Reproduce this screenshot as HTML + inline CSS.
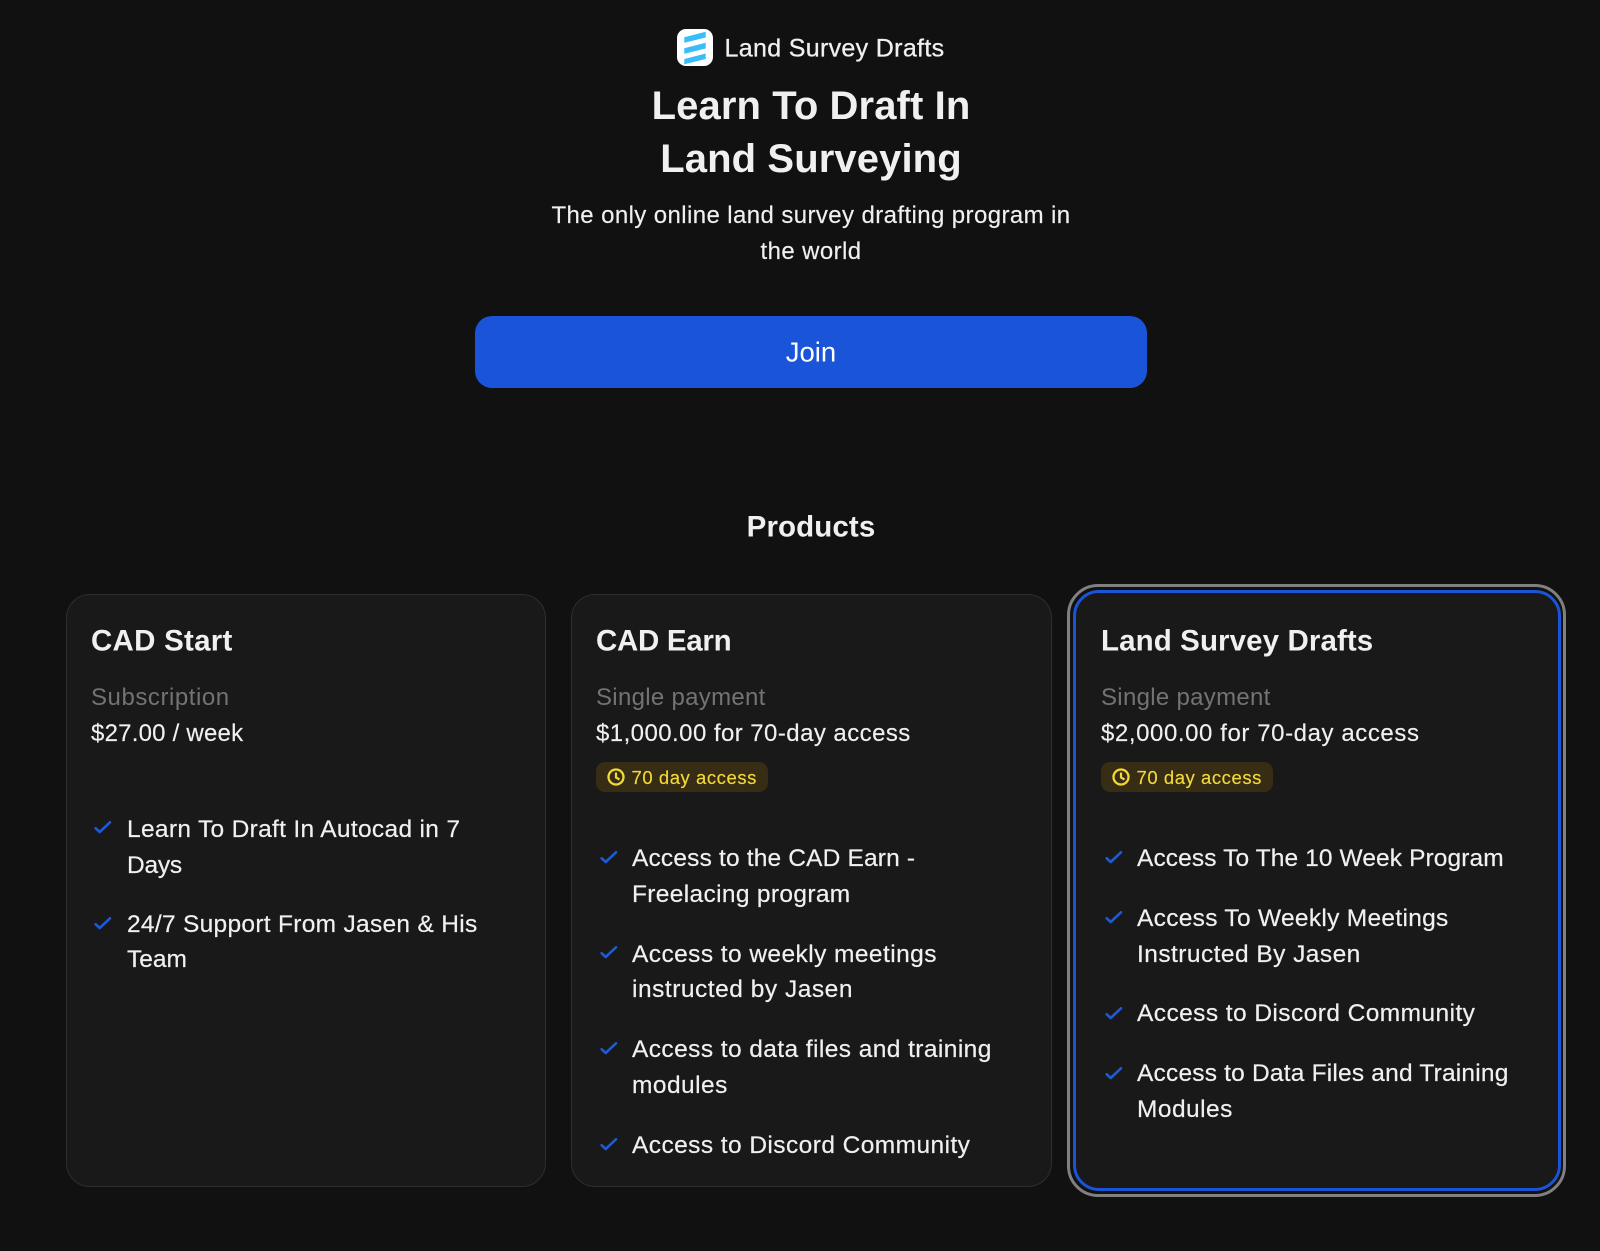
<!DOCTYPE html>
<html lang="en"><head><meta charset="utf-8"><title>Land Survey Drafts</title>
<style>
html,body{margin:0;padding:0;background:#111}
body{position:relative;width:1600px;height:1251px;overflow:hidden;font-family:"Liberation Sans",Arial,sans-serif;color:#f0f0f0}
.t{position:absolute;white-space:nowrap;line-height:1;transform:translateY(-50%)}
.c{left:0;width:1600px;text-align:center}
.h1{font-size:40px;font-weight:700;letter-spacing:.1px}
.sub{font-size:24px;letter-spacing:.4px;-webkit-text-stroke:.15px #f0f0f0}
.title{font-size:29.5px;font-weight:700}
.mut{font-size:24px;color:#737373;letter-spacing:.3px}
.pr{font-size:24px;letter-spacing:.3px;-webkit-text-stroke:.15px #f0f0f0}
.f{font-size:24.5px;-webkit-text-stroke:.2px #f0f0f0}
.card{position:absolute;box-sizing:border-box;background:#191919;border:1.5px solid #2e2e2e;border-radius:24px}
.ring{position:absolute;box-sizing:border-box;border:3.2px solid #808080;border-radius:31px}
.badge{position:absolute;top:762px;height:30px;width:172px;background:#372c14;border-radius:9px}
.bt{font-size:18.5px;color:#f2d93a;letter-spacing:.55px;-webkit-text-stroke:.15px #f2d93a}
svg{position:absolute;overflow:visible}
.ck{fill:none;stroke:#1d5ad8;stroke-width:2.6;stroke-linecap:round;stroke-linejoin:round}
.btn{position:absolute;left:475px;top:316px;width:672px;height:72px;background:#1954d9;border-radius:17px}
</style></head><body>
<svg style="left:677px;top:29px" width="36" height="37" viewBox="0 0 36 37"><rect width="36" height="37" rx="9" fill="#fff"/><path d="M7.300 8.200 28.700 2.800V8.500L7.300 13.800zM7.300 19.200 28.700 13.800V19.500L7.300 24.800zM7.300 30 28.700 24.500V30L7.300 35.300z" fill="#38bdf8"/></svg>
<div class="t" style="left:724.5px;top:48.5px;font-size:25px;letter-spacing:.33px;-webkit-text-stroke:.3px #f0f0f0">Land Survey Drafts</div>
<div class="t c h1" style="top:106px;left:11px">Learn To Draft In</div>
<div class="t c h1" style="top:159px;left:11px">Land Surveying</div>
<div class="t c sub" style="top:216px;left:11px">The only online land survey drafting program in</div>
<div class="t c sub" style="top:252px;left:11px">the world</div>
<div class="btn"></div>
<div class="t c" style="top:352px;left:11px;font-size:27.5px;color:#fff">Join</div>
<div class="t c" style="top:527px;left:11px;font-size:29.5px;font-weight:700;letter-spacing:.1px">Products</div>

<div class="card" style="left:66px;top:594px;width:480px;height:593px"></div>
<div class="card" style="left:571px;top:594px;width:481px;height:593px"></div>
<div class="ring" style="left:1067px;top:584px;width:499px;height:613px"></div>
<div class="card" style="left:1073px;top:590px;width:488px;height:601px;border:3.2px solid #1954d9;border-radius:26px"></div>

<div class="t title" style="left:91px;top:640.5px;letter-spacing:.25px">CAD Start</div>
<div class="t mut" style="left:91px;top:697.5px;letter-spacing:.55px">Subscription</div>
<div class="t pr" style="left:91px;top:733.5px;letter-spacing:.22px">$27.00 / week</div>
<svg style="left:94px;top:820px" width="18" height="14" viewBox="0 0 18 14"><path class="ck" d="M1.700 8.300 5.700 12 16 2.300"/></svg>
<div class="t f" style="left:127px;top:829.5px;letter-spacing:.32px">Learn To Draft In Autocad in 7</div>
<div class="t f" style="left:127px;top:865.5px;letter-spacing:-.25px">Days</div>
<svg style="left:94px;top:916px" width="18" height="14" viewBox="0 0 18 14"><path class="ck" d="M1.700 8.300 5.700 12 16 2.300"/></svg>
<div class="t f" style="left:127px;top:924.5px;letter-spacing:.3px">24/7 Support From Jasen &amp; His</div>
<div class="t f" style="left:127px;top:960px">Team</div>

<div class="t title" style="left:596px;top:640.5px;letter-spacing:-.3px">CAD Earn</div>
<div class="t mut" style="left:596px;top:697.5px">Single payment</div>
<div class="t pr" style="left:596px;top:733.5px;letter-spacing:.44px">$1,000.00 for 70-day access</div>
<div class="badge" style="left:596px"></div>
<svg style="left:607px;top:768px" width="18" height="18" viewBox="0 0 18 18"><circle cx="9" cy="9" r="7.500" fill="none" stroke="#f2d93a" stroke-width="2.300"/><path d="M9 4.500V9.500L12.500 11.500" fill="none" stroke="#f2d93a" stroke-width="2.200"/></svg>
<div class="t bt" style="left:631.5px;top:777.5px">70 day access</div>
<svg style="left:600px;top:850px" width="18" height="14" viewBox="0 0 18 14"><path class="ck" d="M1.700 8.300 5.700 12 16 2.300"/></svg>
<div class="t f" style="left:632px;top:858.5px;letter-spacing:.17px">Access to the CAD Earn -</div>
<div class="t f" style="left:632px;top:894.5px;letter-spacing:.34px">Freelacing program</div>
<svg style="left:600px;top:945px" width="18" height="14" viewBox="0 0 18 14"><path class="ck" d="M1.700 8.300 5.700 12 16 2.300"/></svg>
<div class="t f" style="left:632px;top:954.5px;letter-spacing:.43px">Access to weekly meetings</div>
<div class="t f" style="left:632px;top:990px;letter-spacing:.52px">instructed by Jasen</div>
<svg style="left:600px;top:1041px" width="18" height="14" viewBox="0 0 18 14"><path class="ck" d="M1.700 8.300 5.700 12 16 2.300"/></svg>
<div class="t f" style="left:632px;top:1050px;letter-spacing:.42px">Access to data files and training</div>
<div class="t f" style="left:632px;top:1085.5px;letter-spacing:.46px">modules</div>
<svg style="left:600px;top:1137px" width="18" height="14" viewBox="0 0 18 14"><path class="ck" d="M1.700 8.300 5.700 12 16 2.300"/></svg>
<div class="t f" style="left:632px;top:1145.5px;letter-spacing:.43px">Access to Discord Community</div>

<div class="t title" style="left:1101px;top:640.5px;letter-spacing:.1px">Land Survey Drafts</div>
<div class="t mut" style="left:1101px;top:697.5px">Single payment</div>
<div class="t pr" style="left:1101px;top:733.5px;letter-spacing:.58px">$2,000.00 for 70-day access</div>
<div class="badge" style="left:1101px"></div>
<svg style="left:1112px;top:768px" width="18" height="18" viewBox="0 0 18 18"><circle cx="9" cy="9" r="7.500" fill="none" stroke="#f2d93a" stroke-width="2.300"/><path d="M9 4.500V9.500L12.500 11.500" fill="none" stroke="#f2d93a" stroke-width="2.200"/></svg>
<div class="t bt" style="left:1136.5px;top:777.5px">70 day access</div>
<svg style="left:1105px;top:850px" width="18" height="14" viewBox="0 0 18 14"><path class="ck" d="M1.700 8.300 5.700 12 16 2.300"/></svg>
<div class="t f" style="left:1137px;top:858.5px;letter-spacing:.11px">Access To The 10 Week Program</div>
<svg style="left:1105px;top:910px" width="18" height="14" viewBox="0 0 18 14"><path class="ck" d="M1.700 8.300 5.700 12 16 2.300"/></svg>
<div class="t f" style="left:1137px;top:918.5px;letter-spacing:.3px">Access To Weekly Meetings</div>
<div class="t f" style="left:1137px;top:954.5px;letter-spacing:.45px">Instructed By Jasen</div>
<svg style="left:1105px;top:1006px" width="18" height="14" viewBox="0 0 18 14"><path class="ck" d="M1.700 8.300 5.700 12 16 2.300"/></svg>
<div class="t f" style="left:1137px;top:1014px;letter-spacing:.43px">Access to Discord Community</div>
<svg style="left:1105px;top:1066px" width="18" height="14" viewBox="0 0 18 14"><path class="ck" d="M1.700 8.300 5.700 12 16 2.300"/></svg>
<div class="t f" style="left:1137px;top:1074px;letter-spacing:.2px">Access to Data Files and Training</div>
<div class="t f" style="left:1137px;top:1110px;letter-spacing:.46px">Modules</div>
</body></html>
